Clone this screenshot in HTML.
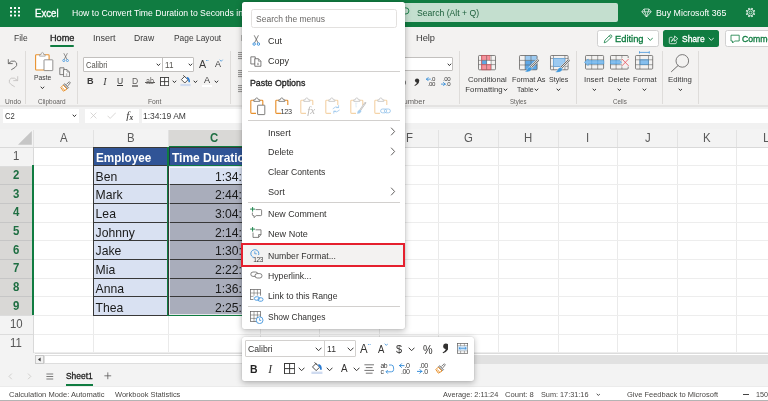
<!DOCTYPE html><html><head><meta charset="utf-8"><title>Excel</title><style>
html,body{margin:0;padding:0;background:#fff}#app{position:relative;width:768px;height:401px;overflow:hidden;background:#fff;font-family:'Liberation Sans', sans-serif}.a{position:absolute;display:block}.t{position:absolute;white-space:nowrap;line-height:20px;transform-origin:0 50%}.ly{position:absolute;left:0;top:0;width:768px;height:401px;will-change:transform}
</style></head><body><div id="app">
<div class="ly">
<div class="a" style="left:0.00px;top:0.00px;width:768.00px;height:26.80px;background:#107c41;"></div>
<svg class="a" style="left:9.70px;top:7.30px;" width="10" height="9.5" viewBox="0 0 10 9.5"><rect x="0" y="0" width="2" height="2" rx="0.3" fill="#fff"/><rect x="0" y="3.7" width="2" height="2" rx="0.3" fill="#fff"/><rect x="0" y="7.4" width="2" height="2" rx="0.3" fill="#fff"/><rect x="4" y="0" width="2" height="2" rx="0.3" fill="#fff"/><rect x="4" y="3.7" width="2" height="2" rx="0.3" fill="#fff"/><rect x="4" y="7.4" width="2" height="2" rx="0.3" fill="#fff"/><rect x="8" y="0" width="2" height="2" rx="0.3" fill="#fff"/><rect x="8" y="3.7" width="2" height="2" rx="0.3" fill="#fff"/><rect x="8" y="7.4" width="2" height="2" rx="0.3" fill="#fff"/></svg>
<div class="a" style="left:330.00px;top:3.20px;width:287.50px;height:19.30px;background:#c4dfcf;border-radius:2px;"></div>
<svg class="a" style="left:398.00px;top:5.00px;" width="14" height="14" viewBox="0 0 14 14"><circle cx="7.8" cy="5.9" r="3.1" fill="none" stroke="#107c41" stroke-width="0.9"/><path d="M5.6 8.2 L3 11" stroke="#107c41" stroke-width="0.9"/></svg>
<svg class="a" style="left:640.50px;top:8.00px;" width="11" height="10" viewBox="0 0 11 10"><path d="M3 1 H8 L10.2 3.8 L5.5 9 L0.8 3.8 Z M0.8 3.8 H10.2 M3 1 L3.9 3.8 L5.5 9 L7.1 3.8 L8 1" fill="none" stroke="#fff" stroke-width="0.7" stroke-linejoin="round"/></svg>
<svg class="a" style="left:745.30px;top:6.70px;" width="11" height="11" viewBox="0 0 11 11"><path d="M8.73 6.84 L9.89 7.32" stroke="#fff" stroke-width="1.5"/><path d="M6.84 8.73 L7.32 9.89" stroke="#fff" stroke-width="1.5"/><path d="M4.16 8.73 L3.68 9.89" stroke="#fff" stroke-width="1.5"/><path d="M2.27 6.84 L1.11 7.32" stroke="#fff" stroke-width="1.5"/><path d="M2.27 4.16 L1.11 3.68" stroke="#fff" stroke-width="1.5"/><path d="M4.16 2.27 L3.68 1.11" stroke="#fff" stroke-width="1.5"/><path d="M6.84 2.27 L7.32 1.11" stroke="#fff" stroke-width="1.5"/><path d="M8.73 4.16 L9.89 3.68" stroke="#fff" stroke-width="1.5"/><circle cx="5.5" cy="5.5" r="3.3" fill="#107c41" stroke="#fff" stroke-width="0.8"/><circle cx="5.5" cy="5.5" r="1.5" fill="none" stroke="#fff" stroke-width="0.7"/></svg>
<div class="a" style="left:0.00px;top:26.80px;width:768.00px;height:23.20px;background:#f3f2f1;"></div>
<div class="a" style="left:50.20px;top:44.90px;width:23.90px;height:1.90px;background:#107c41;border-radius:1px;"></div>
<div class="a" style="left:597.40px;top:29.90px;width:61.20px;height:17.40px;background:#fff;border:0.7px solid #d1d1d1;box-sizing:border-box;border-radius:2.5px;"></div>
<svg class="a" style="left:602.50px;top:33.80px;" width="10" height="10" viewBox="0 0 10 10"><path d="M1.2 8.8 L1.9 6.2 L6.9 1.2 Q7.7 0.5 8.5 1.3 Q9.3 2.1 8.6 2.9 L3.6 7.9 Z M6.2 1.9 L7.9 3.6" fill="none" stroke="#107c41" stroke-width="0.8" stroke-linejoin="round"/></svg>
<svg class="a" style="left:646.70px;top:37.00px;" width="6.6" height="4.4" viewBox="0 0 6.6 4.4"><path d="M1 1 L3.30 3.40 L5.60 1" fill="none" stroke="#107c41" stroke-width="0.85" stroke-linecap="round" stroke-linejoin="round"/></svg>
<div class="a" style="left:663.40px;top:29.90px;width:55.80px;height:17.40px;background:#107c41;border-radius:2.5px;"></div>
<svg class="a" style="left:668.30px;top:33.60px;" width="11" height="11" viewBox="0 0 11 11"><path d="M4 3.3 H2.6 Q1.3 3.3 1.3 4.6 V8.6 Q1.3 9.7 2.6 9.7 H7.2 Q8.4 9.7 8.4 8.6 V7.8 M3.6 7.2 Q3.9 4.3 6.6 4.1 V2 L9.8 4.7 L6.6 7.3 V5.6 Q4.6 5.6 3.6 7.2 Z" fill="none" stroke="#fff" stroke-width="0.75" stroke-linejoin="round" stroke-linecap="round"/></svg>
<svg class="a" style="left:707.70px;top:37.00px;" width="6.6" height="4.4" viewBox="0 0 6.6 4.4"><path d="M1 1 L3.30 3.40 L5.60 1" fill="none" stroke="#fff" stroke-width="0.85" stroke-linecap="round" stroke-linejoin="round"/></svg>
<div class="a" style="left:724.50px;top:29.90px;width:60.00px;height:17.40px;background:#fff;border:0.7px solid #d1d1d1;box-sizing:border-box;border-radius:2.5px;"></div>
<svg class="a" style="left:729.50px;top:33.80px;" width="11" height="10" viewBox="0 0 11 10"><path d="M1 1.2 H9.2 V7 H4.6 L2.6 9 V7 H1 Z" fill="none" stroke="#107c41" stroke-width="0.8" stroke-linejoin="round"/></svg>
<div class="a" style="left:0.00px;top:50.00px;width:768.00px;height:55.00px;background:#f3f2f1;"></div>
<div class="a" style="left:0.00px;top:104.90px;width:768.00px;height:2.20px;background:#e4e3e2;"></div>
<div class="a" style="left:0.00px;top:107.00px;width:768.00px;height:40.50px;background:#f1f1f1;"></div>
<div class="a" style="left:25.25px;top:50.60px;width:0.70px;height:53.40px;background:#dedcda;"></div>
<div class="a" style="left:77.05px;top:50.60px;width:0.70px;height:53.40px;background:#dedcda;"></div>
<div class="a" style="left:230.05px;top:50.60px;width:0.70px;height:53.40px;background:#dedcda;"></div>
<div class="a" style="left:459.35px;top:50.60px;width:0.70px;height:53.40px;background:#dedcda;"></div>
<div class="a" style="left:576.05px;top:50.60px;width:0.70px;height:53.40px;background:#dedcda;"></div>
<div class="a" style="left:661.95px;top:50.60px;width:0.70px;height:53.40px;background:#dedcda;"></div>
<div class="a" style="left:697.75px;top:50.60px;width:0.70px;height:53.40px;background:#dedcda;"></div>
<svg class="a" style="left:7.00px;top:57.50px;" width="12" height="13" viewBox="0 0 12 13"><path d="M1.3 1.6 V5.6 H5.3 M1.5 5.4 Q4.6 1.9 7.8 3.2 Q10.6 4.6 9.6 7.6 Q8.9 9.4 4.6 11.6" fill="none" stroke="#5c5b5a" stroke-width="0.85" stroke-linecap="round" stroke-linejoin="round"/></svg>
<svg class="a" style="left:7.00px;top:75.00px;" width="12" height="13" viewBox="0 0 12 13"><path d="M10.7 1.6 V5.6 H6.7 M10.5 5.4 Q7.4 1.9 4.2 3.2 Q1.4 4.6 2.4 7.6 Q3.1 9.4 7.4 11.6" fill="none" stroke="#c3c1bf" stroke-width="0.85" stroke-linecap="round" stroke-linejoin="round"/></svg>
<svg class="a" style="left:34.00px;top:51.00px;" width="21" height="21" viewBox="0 0 21 21"><rect x="1.6" y="3.8" width="13.5" height="15.2" rx="0.8" fill="#fff" stroke="#e8912d" stroke-width="1.1"/><path d="M5.6 5.2 V3.6 H7 Q7.2 1.4 8.4 1.4 Q9.6 1.4 9.8 3.6 H11.2 V5.2 Z" fill="#f3f2f1" stroke="#8a8886" stroke-width="0.6"/><rect x="10" y="8.8" width="8.8" height="10.8" rx="0.5" fill="#fff" stroke="#7a7978" stroke-width="0.8"/></svg>
<svg class="a" style="left:40.35px;top:86.00px;" width="4.9" height="3.6" viewBox="0 0 4.9 3.6"><path d="M1 1 L2.45 2.60 L3.90 1" fill="none" stroke="#333" stroke-width="1.0" stroke-linecap="round" stroke-linejoin="round"/></svg>
<svg class="a" style="left:61.50px;top:52.60px;" width="7.2" height="9.450000000000001" viewBox="0 0 8 10.5"><path d="M2.2 0.6 L5.6 7.2 M5.8 0.6 L2.4 7.2" stroke="#5c5b5a" stroke-width="0.7" fill="none" stroke-linecap="round"/><circle cx="2" cy="8.4" r="1.15" fill="#fff" stroke="#2b88d8" stroke-width="0.8"/><circle cx="6" cy="8.4" r="1.15" fill="#fff" stroke="#2b88d8" stroke-width="0.8"/></svg>
<svg class="a" style="left:59.40px;top:66.80px;" width="11.5" height="10.5" viewBox="0 0 11.5 10.5"><path d="M0.8 0.8 H5 V7.6 H0.8 Z" fill="none" stroke="#5c5b5a" stroke-width="0.75"/><path d="M4.6 2.6 H8 L10.4 5 V9.8 H4.6 Z" fill="#fff" stroke="#5c5b5a" stroke-width="0.75" stroke-linejoin="round"/><path d="M8 2.6 V5 H10.4 M6.8 7 H8.4 M6.8 8.2 H8.4" fill="none" stroke="#5c5b5a" stroke-width="0.55"/></svg>
<svg class="a" style="left:59.60px;top:81.40px;" width="11.0" height="11.0" viewBox="0 0 11 11"><path d="M6.4 3.4 L9.4 0.8 L10.3 1.8 L7.8 4.9" fill="#fff" stroke="#5c5b5a" stroke-width="0.8" stroke-linejoin="round"/><path d="M4.6 2.6 L8.6 6.6 L7.4 7.8 L3.4 3.8 Z" fill="#c8c6c4" stroke="#5c5b5a" stroke-width="0.6"/><path d="M3.2 4.2 L7 8 L3.4 10.2 L0.8 6.6 Z" fill="#fff" stroke="#e8912d" stroke-width="1" stroke-linejoin="round"/><path d="M2.2 6.4 L4.6 9.2" stroke="#e8912d" stroke-width="0.9"/></svg>
<div class="a" style="left:82.80px;top:56.70px;width:111.10px;height:14.90px;background:#fff;border:0.7px solid #c2c0be;box-sizing:border-box;border-radius:1px;"></div>
<div class="a" style="left:162.30px;top:56.70px;width:0.70px;height:14.90px;background:#c2c0be;"></div>
<svg class="a" style="left:156.35px;top:63.00px;" width="4.9" height="3.6" viewBox="0 0 4.9 3.6"><path d="M1 1 L2.45 2.60 L3.90 1" fill="none" stroke="#333" stroke-width="1.0" stroke-linecap="round" stroke-linejoin="round"/></svg>
<svg class="a" style="left:188.25px;top:63.00px;" width="4.9" height="3.6" viewBox="0 0 4.9 3.6"><path d="M1 1 L2.45 2.60 L3.90 1" fill="none" stroke="#333" stroke-width="1.0" stroke-linecap="round" stroke-linejoin="round"/></svg>
<svg class="a" style="left:205.10px;top:60.25px;" width="4.4" height="0.7" viewBox="0 0 4.4 0.7"><path d="M1 1 L2.20 -0.30 L3.40 1" fill="none" stroke="#2b88d8" stroke-width="0.7" stroke-linecap="round" stroke-linejoin="round"/></svg>
<svg class="a" style="left:219.40px;top:58.95px;" width="4.4" height="3.3" viewBox="0 0 4.4 3.3"><path d="M1 1 L2.20 2.30 L3.40 1" fill="none" stroke="#2b88d8" stroke-width="0.7" stroke-linecap="round" stroke-linejoin="round"/></svg>
<div class="a" style="left:116.70px;top:85.40px;width:6.00px;height:0.70px;background:#3a3a3a;"></div>
<div class="a" style="left:132.00px;top:85.00px;width:6.00px;height:0.60px;background:#8a8886;"></div>
<div class="a" style="left:132.00px;top:86.40px;width:6.00px;height:0.60px;background:#8a8886;"></div>
<div class="a" style="left:145.20px;top:81.90px;width:9.80px;height:0.55px;background:#605e5c;"></div>
<svg class="a" style="left:159.90px;top:76.70px;" width="9.2" height="9.2" viewBox="0 0 9.2 9.2"><rect x="0.5" y="0.5" width="8.2" height="8.2" fill="#fff" stroke="#3b3a39" stroke-width="0.9"/><path d="M4.6 0.5 V8.7 M0.5 4.6 H8.7" stroke="#3b3a39" stroke-width="0.9"/></svg>
<svg class="a" style="left:172.05px;top:80.00px;" width="4.9" height="3.6" viewBox="0 0 4.9 3.6"><path d="M1 1 L2.45 2.60 L3.90 1" fill="none" stroke="#333" stroke-width="1.0" stroke-linecap="round" stroke-linejoin="round"/></svg>
<svg class="a" style="left:180.40px;top:75.40px;" width="11.0" height="12.0" viewBox="0 0 11 12"><path d="M4.6 1.4 L8 4.8 L4.8 8 L1.4 4.6 Z" fill="#fff" stroke="#3b3a39" stroke-width="0.85" stroke-linejoin="round"/><path d="M3.4 0.5 L5.2 2.2" stroke="#3b3a39" stroke-width="0.8" stroke-linecap="round"/><path d="M7.2 1.9 Q10.2 2.6 10 7.2 H8.5 Q8.9 4.6 6.5 2.9 Z" fill="#2b7cd3"/><rect x="0.4" y="8.9" width="10.2" height="2.2" fill="#cfdbf0"/></svg>
<svg class="a" style="left:193.15px;top:80.00px;" width="4.9" height="3.6" viewBox="0 0 4.9 3.6"><path d="M1 1 L2.45 2.60 L3.90 1" fill="none" stroke="#333" stroke-width="1.0" stroke-linecap="round" stroke-linejoin="round"/></svg>
<div class="a" style="left:202.30px;top:85.00px;width:9.70px;height:1.80px;background:#fff;"></div>
<svg class="a" style="left:214.25px;top:80.00px;" width="4.9" height="3.6" viewBox="0 0 4.9 3.6"><path d="M1 1 L2.45 2.60 L3.90 1" fill="none" stroke="#333" stroke-width="1.0" stroke-linecap="round" stroke-linejoin="round"/></svg>
<svg class="a" style="left:238.40px;top:52.40px;" width="6" height="8" viewBox="0 0 6 8"><path d="M0 0.6 H6 M0 2.6 H6 M0 4.6 H6 M0 6.6 H6" stroke="#3b3a39" stroke-width="0.55"/></svg>
<svg class="a" style="left:238.40px;top:69.60px;" width="6" height="8" viewBox="0 0 6 8"><path d="M0 0.6 H6 M0 2.6 H6 M0 4.6 H6 M0 6.6 H6" stroke="#3b3a39" stroke-width="0.55"/></svg>
<svg class="a" style="left:238.40px;top:85.00px;" width="6" height="8" viewBox="0 0 6 8"><path d="M0 0.6 H6 M0 2.6 H6 M0 4.6 H6 M0 6.6 H6" stroke="#3b3a39" stroke-width="0.55"/></svg>
<div class="a" style="left:380.00px;top:56.80px;width:72.80px;height:14.70px;background:#fff;border:0.7px solid #c2c0be;box-sizing:border-box;border-radius:1px;"></div>
<svg class="a" style="left:446.75px;top:63.20px;" width="4.9" height="3.6" viewBox="0 0 4.9 3.6"><path d="M1 1 L2.45 2.60 L3.90 1" fill="none" stroke="#333" stroke-width="1.0" stroke-linecap="round" stroke-linejoin="round"/></svg>
<svg class="a" style="left:414.30px;top:77.75px;" width="5.4" height="8.1" viewBox="0 0 6 9"><circle cx="3.4" cy="2.8" r="2.35" fill="#323130"/><path d="M5.75 2.6 Q6.2 6.8 1 8.9 L0.5 8.2 Q3.5 6.6 3.4 4.2 Z" fill="#323130"/></svg>
<svg class="a" style="left:426.10px;top:76.00px;" width="10.8" height="10.8" viewBox="0 0 10 10"><path d="M0.5 2.9 H4 M0.5 2.9 L2 1.4 M0.5 2.9 L2 4.4" stroke="#2b88d8" stroke-width="0.75" fill="none" stroke-linecap="round"/><text x="4.3" y="4.6" style="font-family:'Liberation Sans',sans-serif;font-size:5.7px;letter-spacing:-0.35px" fill="#3b3a39">.0</text><text x="1.6" y="9.5" style="font-family:'Liberation Sans',sans-serif;font-size:5.7px;letter-spacing:-0.35px" fill="#3b3a39">.00</text></svg>
<svg class="a" style="left:440.90px;top:76.00px;" width="10.8" height="10.8" viewBox="0 0 10 10"><path d="M0.3 7.5 H3.8 M3.8 7.5 L2.3 6 M3.8 7.5 L2.3 9" stroke="#2b88d8" stroke-width="0.75" fill="none" stroke-linecap="round"/><text x="1.8" y="4.6" style="font-family:'Liberation Sans',sans-serif;font-size:5.7px;letter-spacing:-0.35px" fill="#3b3a39">.00</text><text x="4.6" y="9.5" style="font-family:'Liberation Sans',sans-serif;font-size:5.7px;letter-spacing:-0.35px" fill="#3b3a39">.0</text></svg>
<svg class="a" style="left:478.40px;top:55.00px;overflow:visible;" width="18" height="15.3" viewBox="0 0 18 15.3"><rect x="3.60" y="0.50" width="8.20" height="4.90" fill="#f7919b"/><rect x="3.60" y="5.40" width="5.30" height="4.20" fill="#5ea7e6"/><rect x="8.90" y="5.40" width="4.20" height="4.20" fill="#fff"/><rect x="3.60" y="9.60" width="9.10" height="5.20" fill="#f7919b"/><path d="M3.60 0.5 V14.80" stroke="#5c5b5a" stroke-width="0.55"/><path d="M8.60 0.5 V14.80" stroke="#5c5b5a" stroke-width="0.55"/><path d="M13.10 0.5 V14.80" stroke="#5c5b5a" stroke-width="0.55"/><path d="M0.5 5.40 H17.50" stroke="#5c5b5a" stroke-width="0.55"/><path d="M0.5 9.60 H17.50" stroke="#5c5b5a" stroke-width="0.55"/><rect x="0.5" y="0.5" width="17.00" height="14.30" rx="0.9" fill="none" stroke="#5c5b5a" stroke-width="0.75"/><path d="M3.6 0.5 H11.8 V5.4 M3.6 9.6 H12.7 V14.8 H3.6" fill="none" stroke="#e8505b" stroke-width="0.6"/><path d="M3.6 0.5 V14.8" stroke="#e8505b" stroke-width="0.6"/></svg>
<svg class="a" style="left:502.95px;top:88.00px;" width="4.9" height="3.6" viewBox="0 0 4.9 3.6"><path d="M1 1 L2.45 2.60 L3.90 1" fill="none" stroke="#333" stroke-width="1.0" stroke-linecap="round" stroke-linejoin="round"/></svg>
<svg class="a" style="left:519.30px;top:55.00px;overflow:visible;" width="18.6" height="15.3" viewBox="0 0 18.6 15.3"><rect x="6.10" y="0.50" width="12.00" height="4.90" fill="#9ccaf1"/><rect x="6.10" y="5.40" width="12.00" height="9.40" fill="#5ea7e6"/><path d="M6.10 0.5 V14.80" stroke="#5c5b5a" stroke-width="0.55"/><path d="M12.00 0.5 V14.80" stroke="#5c5b5a" stroke-width="0.55"/><path d="M0.5 5.40 H18.10" stroke="#5c5b5a" stroke-width="0.55"/><path d="M0.5 10.00 H18.10" stroke="#5c5b5a" stroke-width="0.55"/><rect x="0.5" y="0.5" width="17.60" height="14.30" rx="0.9" fill="none" stroke="#5c5b5a" stroke-width="0.75"/><path d="M18.8 5.4 L11.9 12.2" stroke="#f3f2f1" stroke-width="3.2" stroke-linecap="round"/><path d="M18.8 5.4 L11.9 12.2" stroke="#5c5b5a" stroke-width="2.1" stroke-linecap="round"/><path d="M18.8 5.4 L11.9 12.2" stroke="#fafafa" stroke-width="0.95" stroke-linecap="round"/><path d="M12.80 12.60 Q9.70 11.00 8.30 13.80 Q7.70 15.80 5.70 16.60 Q10.70 17.80 12.90 14.60 Z" fill="#3f97dd" stroke="#f3f2f1" stroke-width="0.35"/></svg>
<svg class="a" style="left:534.15px;top:88.00px;" width="4.9" height="3.6" viewBox="0 0 4.9 3.6"><path d="M1 1 L2.45 2.60 L3.90 1" fill="none" stroke="#333" stroke-width="1.0" stroke-linecap="round" stroke-linejoin="round"/></svg>
<svg class="a" style="left:549.70px;top:55.00px;overflow:visible;" width="18.6" height="15.3" viewBox="0 0 18.6 15.3"><rect x="3.50" y="3.50" width="11.40" height="7.80" fill="#9ccaf1"/><path d="M3.50 0.5 V14.80" stroke="#5c5b5a" stroke-width="0.55"/><path d="M14.90 0.5 V14.80" stroke="#5c5b5a" stroke-width="0.55"/><path d="M0.5 3.50 H18.10" stroke="#5c5b5a" stroke-width="0.55"/><path d="M0.5 11.30 H18.10" stroke="#5c5b5a" stroke-width="0.55"/><rect x="0.5" y="0.5" width="17.60" height="14.30" rx="0.9" fill="none" stroke="#5c5b5a" stroke-width="0.75"/><rect x="3.5" y="3.5" width="11.4" height="7.8" fill="#9ccaf1" stroke="#5ea7e6" stroke-width="0.6"/><path d="M18.6 5.6 L11.4 12.6" stroke="#f3f2f1" stroke-width="3.2" stroke-linecap="round"/><path d="M18.6 5.6 L11.4 12.6" stroke="#5c5b5a" stroke-width="2.1" stroke-linecap="round"/><path d="M18.6 5.6 L11.4 12.6" stroke="#fafafa" stroke-width="0.95" stroke-linecap="round"/><path d="M12.30 13.00 Q9.20 11.40 7.80 14.20 Q7.20 16.20 5.20 17.00 Q10.20 18.20 12.40 15.00 Z" fill="#3f97dd" stroke="#f3f2f1" stroke-width="0.35"/></svg>
<svg class="a" style="left:556.25px;top:87.80px;" width="4.9" height="3.6" viewBox="0 0 4.9 3.6"><path d="M1 1 L2.45 2.60 L3.90 1" fill="none" stroke="#333" stroke-width="1.0" stroke-linecap="round" stroke-linejoin="round"/></svg>
<svg class="a" style="left:584.50px;top:55.40px;overflow:visible;" width="19.1" height="14.6" viewBox="0 0 19.1 14.6"><path d="M6.70 0.5 V14.10" stroke="#5c5b5a" stroke-width="0.55"/><path d="M12.70 0.5 V14.10" stroke="#5c5b5a" stroke-width="0.55"/><path d="M0.5 4.80 H18.60" stroke="#5c5b5a" stroke-width="0.55"/><path d="M0.5 9.70 H18.60" stroke="#5c5b5a" stroke-width="0.55"/><rect x="0.5" y="0.5" width="18.10" height="13.60" rx="0.9" fill="none" stroke="#5c5b5a" stroke-width="0.75"/><path d="M-0.6 7.3 L3.2 4 V5.6 H18.8 V9 H3.2 V10.6 Z" fill="#86bfee" stroke="#3f97dd" stroke-width="0.5" stroke-linejoin="round"/><path d="M6.7 5.6 V9 M12.7 5.6 V9" stroke="#3f97dd" stroke-width="0.4"/></svg>
<svg class="a" style="left:609.50px;top:55.40px;overflow:visible;" width="18.7" height="14.6" viewBox="0 0 18.7 14.6"><path d="M6.10 0.5 V14.10" stroke="#5c5b5a" stroke-width="0.55"/><path d="M11.90 0.5 V14.10" stroke="#5c5b5a" stroke-width="0.55"/><path d="M0.5 4.80 H18.20" stroke="#5c5b5a" stroke-width="0.55"/><path d="M0.5 9.70 H18.20" stroke="#5c5b5a" stroke-width="0.55"/><rect x="0.5" y="0.5" width="17.70" height="13.60" rx="0.9" fill="none" stroke="#5c5b5a" stroke-width="0.75"/><rect x="11.6" y="3" width="8" height="8.6" fill="#f3f2f1"/><path d="M0.5 5.6 H9.8 L11.4 7.3 L9.8 9 H0.5 Z" fill="#86bfee" stroke="#3f97dd" stroke-width="0.5" stroke-linejoin="round"/><path d="M6.1 5.6 V9" stroke="#3f97dd" stroke-width="0.4"/><path d="M12.2 4.2 L18.4 10.6 M18.4 4.2 L12.2 10.6" stroke="#e8505b" stroke-width="0.8" stroke-linecap="round"/></svg>
<svg class="a" style="left:635.00px;top:55.40px;overflow:visible;" width="18.2" height="14.6" viewBox="0 0 18.2 14.6"><rect x="4.90" y="4.80" width="8.60" height="4.90" fill="#86bfee"/><path d="M4.90 0.5 V14.10" stroke="#5c5b5a" stroke-width="0.55"/><path d="M13.50 0.5 V14.10" stroke="#5c5b5a" stroke-width="0.55"/><path d="M0.5 4.80 H17.70" stroke="#5c5b5a" stroke-width="0.55"/><path d="M0.5 9.70 H17.70" stroke="#5c5b5a" stroke-width="0.55"/><rect x="0.5" y="0.5" width="17.20" height="13.60" rx="0.9" fill="none" stroke="#5c5b5a" stroke-width="0.75"/><rect x="4.9" y="4.8" width="8.6" height="4.9" fill="none" stroke="#3f97dd" stroke-width="0.5"/></svg>
<svg class="a" style="left:638.60px;top:51.40px;" width="11" height="3" viewBox="0 0 11 3"><path d="M0.5 1.4 H10.3 M0.5 0.2 V2.6 M10.3 0.2 V2.6" stroke="#2b88d8" stroke-width="0.7"/></svg>
<svg class="a" style="left:591.55px;top:87.60px;" width="4.9" height="3.6" viewBox="0 0 4.9 3.6"><path d="M1 1 L2.45 2.60 L3.90 1" fill="none" stroke="#333" stroke-width="1.0" stroke-linecap="round" stroke-linejoin="round"/></svg>
<svg class="a" style="left:616.55px;top:87.60px;" width="4.9" height="3.6" viewBox="0 0 4.9 3.6"><path d="M1 1 L2.45 2.60 L3.90 1" fill="none" stroke="#333" stroke-width="1.0" stroke-linecap="round" stroke-linejoin="round"/></svg>
<svg class="a" style="left:641.75px;top:87.60px;" width="4.9" height="3.6" viewBox="0 0 4.9 3.6"><path d="M1 1 L2.45 2.60 L3.90 1" fill="none" stroke="#333" stroke-width="1.0" stroke-linecap="round" stroke-linejoin="round"/></svg>
<svg class="a" style="left:677.55px;top:87.60px;" width="4.9" height="3.6" viewBox="0 0 4.9 3.6"><path d="M1 1 L2.45 2.60 L3.90 1" fill="none" stroke="#333" stroke-width="1.0" stroke-linecap="round" stroke-linejoin="round"/></svg>
<svg class="a" style="left:670.00px;top:53.00px;" width="20" height="20" viewBox="0 0 20 20"><circle cx="12.3" cy="7.9" r="6.3" fill="none" stroke="#5c5b5a" stroke-width="0.8"/><path d="M7.9 12.7 L1.5 18.6" stroke="#5c5b5a" stroke-width="0.9" stroke-linecap="round"/></svg>
<div class="a" style="left:3.00px;top:108.60px;width:76.30px;height:14.10px;background:#fff;"></div>
<div class="a" style="left:84.70px;top:108.60px;width:54.10px;height:14.10px;background:#fff;"></div>
<div class="a" style="left:141.80px;top:108.60px;width:630.00px;height:14.10px;background:#fff;"></div>
<svg class="a" style="left:72.25px;top:114.40px;" width="4.9" height="3.6" viewBox="0 0 4.9 3.6"><path d="M1 1 L2.45 2.60 L3.90 1" fill="none" stroke="#333" stroke-width="1.0" stroke-linecap="round" stroke-linejoin="round"/></svg>
<svg class="a" style="left:90.20px;top:112.00px;" width="7" height="7" viewBox="0 0 7 7"><path d="M0.6 0.6 L6.4 6.4 M6.4 0.6 L0.6 6.4" stroke="#c8c6c4" stroke-width="0.7"/></svg>
<svg class="a" style="left:106.60px;top:112.00px;" width="9.5" height="7" viewBox="0 0 9.5 7"><path d="M0.6 3.8 L3.2 6.4 L8.9 0.6" fill="none" stroke="#c8c6c4" stroke-width="0.7"/></svg>
<div class="a" style="left:33.40px;top:147.20px;width:734.60px;height:205.70px;background:#fff;"></div>
<div class="a" style="left:0.00px;top:129.40px;width:768.00px;height:17.80px;background:#f3f3f3;"></div>
<div class="a" style="left:0.00px;top:147.20px;width:33.40px;height:205.70px;background:#f3f3f3;"></div>
<div class="a" style="left:169.00px;top:129.60px;width:91.00px;height:17.60px;background:#d9d8d6;"></div>
<div class="a" style="left:0.00px;top:165.90px;width:33.40px;height:149.60px;background:#d9d8d6;"></div>
<div class="a" style="left:92.95px;top:147.20px;width:0.90px;height:205.70px;background:#eaeaea;"></div>
<div class="a" style="left:92.90px;top:130.00px;width:1.00px;height:17.20px;background:#e2e2e2;"></div>
<div class="a" style="left:167.95px;top:147.20px;width:0.90px;height:205.70px;background:#eaeaea;"></div>
<div class="a" style="left:167.90px;top:130.00px;width:1.00px;height:17.20px;background:#e2e2e2;"></div>
<div class="a" style="left:259.55px;top:147.20px;width:0.90px;height:205.70px;background:#eaeaea;"></div>
<div class="a" style="left:259.50px;top:130.00px;width:1.00px;height:17.20px;background:#e2e2e2;"></div>
<div class="a" style="left:319.15px;top:147.20px;width:0.90px;height:205.70px;background:#eaeaea;"></div>
<div class="a" style="left:319.10px;top:130.00px;width:1.00px;height:17.20px;background:#e2e2e2;"></div>
<div class="a" style="left:378.75px;top:147.20px;width:0.90px;height:205.70px;background:#eaeaea;"></div>
<div class="a" style="left:378.70px;top:130.00px;width:1.00px;height:17.20px;background:#e2e2e2;"></div>
<div class="a" style="left:438.35px;top:147.20px;width:0.90px;height:205.70px;background:#eaeaea;"></div>
<div class="a" style="left:438.30px;top:130.00px;width:1.00px;height:17.20px;background:#e2e2e2;"></div>
<div class="a" style="left:497.95px;top:147.20px;width:0.90px;height:205.70px;background:#eaeaea;"></div>
<div class="a" style="left:497.90px;top:130.00px;width:1.00px;height:17.20px;background:#e2e2e2;"></div>
<div class="a" style="left:557.55px;top:147.20px;width:0.90px;height:205.70px;background:#eaeaea;"></div>
<div class="a" style="left:557.50px;top:130.00px;width:1.00px;height:17.20px;background:#e2e2e2;"></div>
<div class="a" style="left:617.15px;top:147.20px;width:0.90px;height:205.70px;background:#eaeaea;"></div>
<div class="a" style="left:617.10px;top:130.00px;width:1.00px;height:17.20px;background:#e2e2e2;"></div>
<div class="a" style="left:676.75px;top:147.20px;width:0.90px;height:205.70px;background:#eaeaea;"></div>
<div class="a" style="left:676.70px;top:130.00px;width:1.00px;height:17.20px;background:#e2e2e2;"></div>
<div class="a" style="left:736.35px;top:147.20px;width:0.90px;height:205.70px;background:#eaeaea;"></div>
<div class="a" style="left:736.30px;top:130.00px;width:1.00px;height:17.20px;background:#e2e2e2;"></div>
<div class="a" style="left:795.95px;top:147.20px;width:0.90px;height:205.70px;background:#eaeaea;"></div>
<div class="a" style="left:795.90px;top:130.00px;width:1.00px;height:17.20px;background:#e2e2e2;"></div>
<div class="a" style="left:855.55px;top:147.20px;width:0.90px;height:205.70px;background:#eaeaea;"></div>
<div class="a" style="left:855.50px;top:130.00px;width:1.00px;height:17.20px;background:#e2e2e2;"></div>
<div class="a" style="left:32.90px;top:130.00px;width:1.00px;height:17.20px;background:#e2e2e2;"></div>
<div class="a" style="left:33.40px;top:165.40px;width:734.60px;height:1.00px;background:#ededed;"></div>
<div class="a" style="left:0.00px;top:165.50px;width:33.40px;height:0.80px;background:#dcdcdc;"></div>
<div class="a" style="left:33.40px;top:184.10px;width:734.60px;height:1.00px;background:#ededed;"></div>
<div class="a" style="left:0.00px;top:184.20px;width:33.40px;height:0.80px;background:#c6c6c6;"></div>
<div class="a" style="left:33.40px;top:202.80px;width:734.60px;height:1.00px;background:#ededed;"></div>
<div class="a" style="left:0.00px;top:202.90px;width:33.40px;height:0.80px;background:#c6c6c6;"></div>
<div class="a" style="left:33.40px;top:221.50px;width:734.60px;height:1.00px;background:#ededed;"></div>
<div class="a" style="left:0.00px;top:221.60px;width:33.40px;height:0.80px;background:#c6c6c6;"></div>
<div class="a" style="left:33.40px;top:240.20px;width:734.60px;height:1.00px;background:#ededed;"></div>
<div class="a" style="left:0.00px;top:240.30px;width:33.40px;height:0.80px;background:#c6c6c6;"></div>
<div class="a" style="left:33.40px;top:258.90px;width:734.60px;height:1.00px;background:#ededed;"></div>
<div class="a" style="left:0.00px;top:259.00px;width:33.40px;height:0.80px;background:#c6c6c6;"></div>
<div class="a" style="left:33.40px;top:277.60px;width:734.60px;height:1.00px;background:#ededed;"></div>
<div class="a" style="left:0.00px;top:277.70px;width:33.40px;height:0.80px;background:#c6c6c6;"></div>
<div class="a" style="left:33.40px;top:296.30px;width:734.60px;height:1.00px;background:#ededed;"></div>
<div class="a" style="left:0.00px;top:296.40px;width:33.40px;height:0.80px;background:#c6c6c6;"></div>
<div class="a" style="left:33.40px;top:315.00px;width:734.60px;height:1.00px;background:#ededed;"></div>
<div class="a" style="left:0.00px;top:315.10px;width:33.40px;height:0.80px;background:#dcdcdc;"></div>
<div class="a" style="left:33.40px;top:333.70px;width:734.60px;height:1.00px;background:#ededed;"></div>
<div class="a" style="left:0.00px;top:333.80px;width:33.40px;height:0.80px;background:#dcdcdc;"></div>
<div class="a" style="left:33.40px;top:352.40px;width:734.60px;height:1.00px;background:#ededed;"></div>
<div class="a" style="left:0.00px;top:352.50px;width:33.40px;height:0.80px;background:#dcdcdc;"></div>
<div class="a" style="left:0.00px;top:146.70px;width:768.00px;height:1.00px;background:#d9d9d9;"></div>
<div class="a" style="left:32.90px;top:147.20px;width:1.00px;height:205.70px;background:#d9d9d9;"></div>
<svg class="a" style="left:18.00px;top:130.80px;" width="14" height="14" viewBox="0 0 14 14"><path d="M13.8 0 V13.8 H0 Z" fill="#c6c6c6"/></svg>
<div class="a" style="left:93.40px;top:147.20px;width:166.60px;height:18.70px;background:#305496;"></div>
<div class="a" style="left:93.40px;top:165.90px;width:75.00px;height:149.60px;background:#d9e1f2;"></div>
<div class="a" style="left:168.40px;top:165.90px;width:91.60px;height:18.70px;background:#d9e1f2;"></div>
<div class="a" style="left:168.40px;top:184.60px;width:91.60px;height:130.90px;background:#a9adbb;"></div>
<div class="a" style="left:93.40px;top:146.75px;width:166.60px;height:0.90px;background:#383838;"></div>
<div class="a" style="left:93.40px;top:165.45px;width:166.60px;height:0.90px;background:#383838;"></div>
<div class="a" style="left:93.40px;top:184.15px;width:166.60px;height:0.90px;background:#383838;"></div>
<div class="a" style="left:93.40px;top:202.85px;width:166.60px;height:0.90px;background:#383838;"></div>
<div class="a" style="left:93.40px;top:221.55px;width:166.60px;height:0.90px;background:#383838;"></div>
<div class="a" style="left:93.40px;top:240.25px;width:166.60px;height:0.90px;background:#383838;"></div>
<div class="a" style="left:93.40px;top:258.95px;width:166.60px;height:0.90px;background:#383838;"></div>
<div class="a" style="left:93.40px;top:277.65px;width:166.60px;height:0.90px;background:#383838;"></div>
<div class="a" style="left:93.40px;top:296.35px;width:166.60px;height:0.90px;background:#383838;"></div>
<div class="a" style="left:93.40px;top:315.05px;width:166.60px;height:0.90px;background:#383838;"></div>
<div class="a" style="left:92.95px;top:147.20px;width:0.90px;height:168.30px;background:#383838;"></div>
<div class="a" style="left:167.95px;top:147.20px;width:0.90px;height:168.30px;background:#383838;"></div>
<div class="a" style="left:259.55px;top:147.20px;width:0.90px;height:168.30px;background:#383838;"></div>
<div class="a" style="left:169.00px;top:146.10px;width:91.00px;height:1.40px;background:#107c41;"></div>
<div class="a" style="left:32.20px;top:164.70px;width:1.80px;height:150.80px;background:#107c41;"></div>
<div class="a" style="left:169.20px;top:147.60px;width:1.10px;height:17.90px;background:#1d2f5e;"></div>
<div class="a" style="left:167.30px;top:146.60px;width:1.90px;height:18.70px;background:#107c41;"></div>
<div class="a" style="left:167.30px;top:164.70px;width:93.40px;height:151.80px;border:1.9px solid #107c41;box-sizing:border-box;"></div>
<div class="a" style="left:169.20px;top:166.60px;width:89.60px;height:148.00px;border:0.9px solid rgba(255,255,255,0.7);box-sizing:border-box;"></div>
<div class="a" style="left:0.00px;top:352.90px;width:35.00px;height:11.60px;background:#f3f3f3;"></div>
<div class="a" style="left:35.00px;top:352.90px;width:733.00px;height:11.60px;background:#fff;"></div>
<div class="a" style="left:35.00px;top:352.60px;width:733.00px;height:0.80px;background:#dcdcdc;"></div>
<div class="a" style="left:35.00px;top:355.00px;width:9.30px;height:9.20px;background:#f1f1f1;border:0.6px solid #c8c8c8;box-sizing:border-box;"></div>
<svg class="a" style="left:37.40px;top:357.20px;" width="5" height="5" viewBox="0 0 5 5"><path d="M3.6 0.6 V4.4 L1 2.5 Z" fill="#333"/></svg>
<div class="a" style="left:44.30px;top:355.00px;width:730.00px;height:9.20px;background:#fff;border:0.7px solid #dedede;box-sizing:border-box;"></div>
<div class="a" style="left:300.00px;top:355.00px;width:470.00px;height:9.40px;background:#e1e1e1;"></div>
<div class="a" style="left:0.00px;top:363.80px;width:768.00px;height:22.90px;background:#f3f3f3;"></div>
<svg class="a" style="left:8.00px;top:372.80px;" width="5" height="7" viewBox="0 0 5 7"><path d="M3.8 0.6 L1 3.4 L3.8 6.2" fill="none" stroke="#c8c6c4" stroke-width="0.8"/></svg>
<svg class="a" style="left:27.40px;top:372.80px;" width="5" height="7" viewBox="0 0 5 7"><path d="M1 0.6 L3.8 3.4 L1 6.2" fill="none" stroke="#c8c6c4" stroke-width="0.8"/></svg>
<svg class="a" style="left:45.60px;top:372.60px;" width="8" height="7" viewBox="0 0 8 7"><path d="M0.4 1 H7.2 M0.4 3.5 H7.2 M0.4 6 H7.2" stroke="#5c5b5a" stroke-width="0.8"/></svg>
<div class="a" style="left:66.30px;top:384.00px;width:26.30px;height:1.70px;background:#107c41;"></div>
<svg class="a" style="left:104.20px;top:372.40px;" width="8" height="8" viewBox="0 0 8 8"><path d="M3.8 0.4 V7.2 M0.4 3.8 H7.2" stroke="#5c5b5a" stroke-width="0.8"/></svg>
<div class="a" style="left:0.00px;top:386.50px;width:768.00px;height:14.50px;background:#fff;"></div>
<div class="a" style="left:0.00px;top:399.80px;width:768.00px;height:1.20px;background:#b4b4b4;"></div>
<div class="a" style="left:0.00px;top:386.20px;width:768.00px;height:0.60px;background:#ebebeb;"></div>
<svg class="a" style="left:595.50px;top:393.05px;" width="4.8" height="3.5" viewBox="0 0 4.8 3.5"><path d="M1 1 L2.40 2.50 L3.80 1" fill="none" stroke="#444" stroke-width="0.9" stroke-linecap="round" stroke-linejoin="round"/></svg>
<div class="a" style="left:743.40px;top:394.00px;width:6.00px;height:0.70px;background:#444;"></div>
<span class="t" style="left:34.79px;top:4px;font-size:10.3px;color:#fff;-webkit-text-stroke:0.35px #fff;transform:scaleX(0.935);">Excel</span>
<span class="t" style="left:71.90px;top:3px;font-size:9.33px;color:#fff;transform:scaleX(0.929);">How to Convert Time Duration to Seconds in Excel</span>
<span class="t" style="left:416.92px;top:3px;font-size:9.33px;color:#1b5e3a;transform:scaleX(0.924);">Search (Alt + Q)</span>
<span class="t" style="left:655.52px;top:3px;font-size:9.33px;color:#fff;transform:scaleX(0.943);">Buy Microsoft 365</span>
<span class="t" style="left:13.62px;top:28px;font-size:9.33px;color:#3a3a3a;transform:scaleX(0.906);">File</span>
<span class="t" style="left:50.42px;top:28px;font-size:9.33px;color:#242424;-webkit-text-stroke:0.32px #242424;transform:scaleX(0.981);">Home</span>
<span class="t" style="left:93.32px;top:28px;font-size:9.33px;color:#3a3a3a;transform:scaleX(0.965);">Insert</span>
<span class="t" style="left:134.42px;top:28px;font-size:9.33px;color:#3a3a3a;transform:scaleX(0.924);">Draw</span>
<span class="t" style="left:174.22px;top:28px;font-size:9.33px;color:#3a3a3a;transform:scaleX(0.901);">Page Layout</span>
<span class="t" style="left:416.12px;top:28px;font-size:9.33px;color:#3a3a3a;transform:scaleX(0.991);">Help</span>
<span class="t" style="left:240.60px;top:28px;font-size:9.33px;color:#3a3a3a;transform:scaleX(0.920);">Formulas</span>
<span class="t" style="left:615.02px;top:29px;font-size:9.33px;color:#107c41;-webkit-text-stroke:0.32px #107c41;">Editing</span>
<span class="t" style="left:681.72px;top:29px;font-size:9.33px;color:#fff;-webkit-text-stroke:0.32px #fff;transform:scaleX(0.909);">Share</span>
<span class="t" style="left:742.40px;top:29px;font-size:9.33px;color:#107c41;-webkit-text-stroke:0.32px #107c41;transform:scaleX(0.930);">Comments</span>
<span class="t" style="left:4.79px;top:92px;font-size:6.9px;color:#605e5c;transform:scaleX(0.961);">Undo</span>
<span class="t" style="left:37.89px;top:92px;font-size:6.9px;color:#605e5c;transform:scaleX(0.937);">Clipboard</span>
<span class="t" style="left:147.69px;top:92px;font-size:6.9px;color:#605e5c;transform:scaleX(0.974);">Font</span>
<span class="t" style="left:398.29px;top:92px;font-size:6.9px;color:#605e5c;transform:scaleX(1.099);">Number</span>
<span class="t" style="left:509.99px;top:92px;font-size:6.9px;color:#605e5c;transform:scaleX(0.875);">Styles</span>
<span class="t" style="left:612.79px;top:92px;font-size:6.9px;color:#605e5c;transform:scaleX(0.903);">Cells</span>
<span class="t" style="left:34.37px;top:68px;font-size:7.8px;color:#3a3a3a;transform:scaleX(0.870);">Paste</span>
<span class="t" style="left:85.83px;top:55px;font-size:9px;color:#55534f;transform:scaleX(0.838);">Calibri</span>
<span class="t" style="left:165.20px;top:55px;font-size:9px;color:#55534f;transform:scaleX(0.900);">11</span>
<span class="t" style="left:198.86px;top:54px;font-size:11.2px;color:#3a3a3a;transform:scaleX(0.950);">A</span>
<span class="t" style="left:214.53px;top:54px;font-size:9.4px;color:#3a3a3a;transform:scaleX(0.950);">A</span>
<span class="t" style="left:87.01px;top:71px;font-size:9.6px;color:#3a3a3a;font-weight:bold;transform:scaleX(0.950);">B</span>
<span class="t" style="left:103.33px;top:72px;font-size:10px;color:#3a3a3a;font-style:italic;font-family:'Liberation Serif', serif;">I</span>
<span class="t" style="left:116.61px;top:71px;font-size:9px;color:#3a3a3a;transform:scaleX(0.950);">U</span>
<span class="t" style="left:131.91px;top:71px;font-size:9px;color:#605e5c;transform:scaleX(0.950);">D</span>
<span class="t" style="left:146.10px;top:71px;font-size:9px;color:#605e5c;transform:scaleX(0.800);">ab</span>
<span class="t" style="left:204.26px;top:70px;font-size:9.6px;color:#3a3a3a;transform:scaleX(0.950);">A</span>
<span class="t" style="left:398.40px;top:72px;font-size:10px;color:#3a3a3a;transform:scaleX(0.900);">%</span>
<span class="t" style="left:468.17px;top:70px;font-size:7.8px;color:#3a3a3a;transform:scaleX(0.993);">Conditional</span>
<span class="t" style="left:465.37px;top:80px;font-size:7.8px;color:#3a3a3a;">Formatting</span>
<span class="t" style="left:511.77px;top:70px;font-size:7.8px;color:#3a3a3a;transform:scaleX(0.944);">Format As</span>
<span class="t" style="left:516.87px;top:80px;font-size:7.8px;color:#3a3a3a;transform:scaleX(0.893);">Table</span>
<span class="t" style="left:549.47px;top:70px;font-size:7.8px;color:#3a3a3a;transform:scaleX(0.911);">Styles</span>
<span class="t" style="left:584.47px;top:70px;font-size:7.8px;color:#3a3a3a;transform:scaleX(1.012);">Insert</span>
<span class="t" style="left:608.47px;top:70px;font-size:7.8px;color:#3a3a3a;transform:scaleX(0.978);">Delete</span>
<span class="t" style="left:632.97px;top:70px;font-size:7.8px;color:#3a3a3a;transform:scaleX(0.953);">Format</span>
<span class="t" style="left:668.47px;top:70px;font-size:7.8px;color:#3a3a3a;transform:scaleX(1.004);">Editing</span>
<span class="t" style="left:5.23px;top:106px;font-size:9px;color:#3a3a3a;transform:scaleX(0.850);">C2</span>
<span class="t" style="left:126.20px;top:105px;font-size:11px;color:#3b3a39;font-style:italic;font-family:'Liberation Serif', serif;">f</span>
<span class="t" style="left:129.60px;top:108px;font-size:7.5px;color:#3b3a39;font-weight:bold;font-style:italic;font-family:'Liberation Serif', serif;">x</span>
<span class="t" style="left:143.13px;top:106px;font-size:9px;color:#3a3a3a;transform:scaleX(0.942);">1:34:19 AM</span>
<span class="t" style="left:59.60px;top:128px;font-size:12px;color:#5a5a5a;transform:scaleX(0.950);">A</span>
<span class="t" style="left:127.10px;top:128px;font-size:12px;color:#5a5a5a;transform:scaleX(0.950);">B</span>
<span class="t" style="left:405.52px;top:128px;font-size:12px;color:#5a5a5a;transform:scaleX(0.950);">F</span>
<span class="t" style="left:464.17px;top:128px;font-size:12px;color:#5a5a5a;transform:scaleX(0.950);">G</span>
<span class="t" style="left:524.08px;top:128px;font-size:12px;color:#5a5a5a;transform:scaleX(0.950);">H</span>
<span class="t" style="left:586.22px;top:128px;font-size:12px;color:#5a5a5a;transform:scaleX(0.950);">I</span>
<span class="t" style="left:644.55px;top:128px;font-size:12px;color:#5a5a5a;transform:scaleX(0.950);">J</span>
<span class="t" style="left:703.20px;top:128px;font-size:12px;color:#5a5a5a;transform:scaleX(0.950);">K</span>
<span class="t" style="left:763.43px;top:128px;font-size:12px;color:#5a5a5a;transform:scaleX(0.950);">L</span>
<span class="t" style="left:210.08px;top:128px;font-size:12px;color:#1e6e42;font-weight:bold;transform:scaleX(0.950);">C</span>
<span class="t" style="left:13.13px;top:146px;font-size:12.4px;color:#555;transform:scaleX(0.920);">1</span>
<span class="t" style="left:13.13px;top:165px;font-size:12.4px;color:#1e6e42;font-weight:bold;transform:scaleX(0.920);">2</span>
<span class="t" style="left:13.13px;top:184px;font-size:12.4px;color:#1e6e42;font-weight:bold;transform:scaleX(0.920);">3</span>
<span class="t" style="left:13.13px;top:202px;font-size:12.4px;color:#1e6e42;font-weight:bold;transform:scaleX(0.920);">4</span>
<span class="t" style="left:13.13px;top:221px;font-size:12.4px;color:#1e6e42;font-weight:bold;transform:scaleX(0.920);">5</span>
<span class="t" style="left:13.13px;top:240px;font-size:12.4px;color:#1e6e42;font-weight:bold;transform:scaleX(0.920);">6</span>
<span class="t" style="left:13.13px;top:258px;font-size:12.4px;color:#1e6e42;font-weight:bold;transform:scaleX(0.920);">7</span>
<span class="t" style="left:13.13px;top:277px;font-size:12.4px;color:#1e6e42;font-weight:bold;transform:scaleX(0.920);">8</span>
<span class="t" style="left:13.13px;top:296px;font-size:12.4px;color:#1e6e42;font-weight:bold;transform:scaleX(0.920);">9</span>
<span class="t" style="left:9.96px;top:314px;font-size:12.4px;color:#555;transform:scaleX(0.920);">10</span>
<span class="t" style="left:10.38px;top:333px;font-size:12.4px;color:#555;transform:scaleX(0.920);">11</span>
<span class="t" style="left:95.83px;top:148px;font-size:12.2px;color:#fff;font-weight:bold;transform:scaleX(0.960);">Employee</span>
<span class="t" style="left:171.80px;top:148px;font-size:12.2px;color:#fff;font-weight:bold;transform:scaleX(0.982);">Time Duration</span>
<span class="t" style="left:95.60px;top:167px;font-size:12.2px;color:#1a1a1a;">Ben</span>
<span class="t" style="left:214.90px;top:167px;font-size:12.2px;color:#1a1a1a;">1:34:19</span>
<span class="t" style="left:95.60px;top:185px;font-size:12.2px;color:#1a1a1a;">Mark</span>
<span class="t" style="left:214.90px;top:185px;font-size:12.2px;color:#1a1a1a;">2:44:32</span>
<span class="t" style="left:95.60px;top:204px;font-size:12.2px;color:#1a1a1a;">Lea</span>
<span class="t" style="left:214.90px;top:204px;font-size:12.2px;color:#1a1a1a;">3:04:10</span>
<span class="t" style="left:95.60px;top:223px;font-size:12.2px;color:#1a1a1a;">Johnny</span>
<span class="t" style="left:214.90px;top:223px;font-size:12.2px;color:#1a1a1a;">2:14:45</span>
<span class="t" style="left:95.60px;top:241px;font-size:12.2px;color:#1a1a1a;">Jake</span>
<span class="t" style="left:214.90px;top:241px;font-size:12.2px;color:#1a1a1a;">1:30:27</span>
<span class="t" style="left:95.60px;top:260px;font-size:12.2px;color:#1a1a1a;">Mia</span>
<span class="t" style="left:214.90px;top:260px;font-size:12.2px;color:#1a1a1a;">2:22:08</span>
<span class="t" style="left:95.60px;top:279px;font-size:12.2px;color:#1a1a1a;">Anna</span>
<span class="t" style="left:214.90px;top:279px;font-size:12.2px;color:#1a1a1a;">1:36:50</span>
<span class="t" style="left:95.60px;top:298px;font-size:12.2px;color:#1a1a1a;">Thea</span>
<span class="t" style="left:214.90px;top:298px;font-size:12.2px;color:#1a1a1a;">2:25:05</span>
<span class="t" style="left:66.32px;top:366px;font-size:9.33px;color:#242424;-webkit-text-stroke:0.32px #242424;transform:scaleX(0.904);">Sheet1</span>
<span class="t" style="left:8.76px;top:385px;font-size:8px;color:#484644;transform:scaleX(0.942);">Calculation Mode: Automatic</span>
<span class="t" style="left:115.36px;top:385px;font-size:8px;color:#484644;transform:scaleX(0.932);">Workbook Statistics</span>
<span class="t" style="left:442.76px;top:385px;font-size:8px;color:#484644;transform:scaleX(0.918);">Average: 2:11:24</span>
<span class="t" style="left:505.16px;top:385px;font-size:8px;color:#484644;transform:scaleX(0.951);">Count: 8</span>
<span class="t" style="left:540.66px;top:385px;font-size:8px;color:#484644;transform:scaleX(0.912);">Sum: 17:31:16</span>
<span class="t" style="left:626.86px;top:385px;font-size:8px;color:#484644;transform:scaleX(0.935);">Give Feedback to Microsoft</span>
<span class="t" style="left:755.50px;top:385px;font-size:8px;color:#484644;transform:scaleX(0.900);">150%</span>
</div>
<div class="ly">
<div class="a" style="left:242.10px;top:2.20px;width:162.80px;height:326.90px;background:#fff;border-radius:2.5px;box-shadow:0 1.5px 6px rgba(0,0,0,.28),0 0 1.5px rgba(0,0,0,.18);"></div>
<div class="a" style="left:250.50px;top:9.40px;width:146.70px;height:18.70px;background:#fff;border:0.7px solid #e3e1df;box-sizing:border-box;border-radius:2.5px;"></div>
<svg class="a" style="left:251.50px;top:35.10px;" width="8.64" height="11.34" viewBox="0 0 8 10.5"><path d="M2.2 0.6 L5.6 7.2 M5.8 0.6 L2.4 7.2" stroke="#5c5b5a" stroke-width="0.7" fill="none" stroke-linecap="round"/><circle cx="2" cy="8.4" r="1.15" fill="#fff" stroke="#2b88d8" stroke-width="0.8"/><circle cx="6" cy="8.4" r="1.15" fill="#fff" stroke="#2b88d8" stroke-width="0.8"/></svg>
<svg class="a" style="left:250.40px;top:55.80px;" width="12.075000000000001" height="11.025" viewBox="0 0 11.5 10.5"><path d="M0.8 0.8 H5 V7.6 H0.8 Z" fill="none" stroke="#5c5b5a" stroke-width="0.75"/><path d="M4.6 2.6 H8 L10.4 5 V9.8 H4.6 Z" fill="#fff" stroke="#5c5b5a" stroke-width="0.75" stroke-linejoin="round"/><path d="M8 2.6 V5 H10.4 M6.8 7 H8.4 M6.8 8.2 H8.4" fill="none" stroke="#5c5b5a" stroke-width="0.55"/></svg>
<div class="a" style="left:248.40px;top:70.65px;width:151.30px;height:0.70px;background:#d2d0ce;"></div>
<div class="a" style="left:248.40px;top:120.45px;width:151.30px;height:0.70px;background:#d2d0ce;"></div>
<div class="a" style="left:248.40px;top:202.05px;width:151.30px;height:0.70px;background:#d2d0ce;"></div>
<div class="a" style="left:248.40px;top:305.55px;width:151.30px;height:0.70px;background:#d2d0ce;"></div>
<svg class="a" style="left:250.30px;top:97.20px;" width="19" height="19" viewBox="0 0 19 19"><g opacity="1"><path d="M4 3.2 H1.6 Q0.8 3.2 0.8 4 V15.6 Q0.8 16.4 1.6 16.4 H6" fill="none" stroke="#e8912d" stroke-width="1.15"/><path d="M9.6 3.2 H12 Q12.8 3.2 12.8 4 V8" fill="none" stroke="#e8912d" stroke-width="1.15"/><path d="M3.8 4.4 V2.8 H5.2 Q5.4 0.9 6.8 0.9 Q8.2 0.9 8.4 2.8 H9.8 V4.4 Z" fill="#fff" stroke="#605e5c" stroke-width="0.7"/></g><rect x="7.6" y="8.2" width="7.2" height="9.4" rx="0.5" fill="#fff" stroke="#605e5c" stroke-width="0.8"/></svg>
<svg class="a" style="left:275.20px;top:97.20px;" width="19" height="19" viewBox="0 0 19 19"><g opacity="1"><path d="M4 3.2 H1.6 Q0.8 3.2 0.8 4 V15.6 Q0.8 16.4 1.6 16.4 H6" fill="none" stroke="#e8912d" stroke-width="1.15"/><path d="M9.6 3.2 H12 Q12.8 3.2 12.8 4 V8" fill="none" stroke="#e8912d" stroke-width="1.15"/><path d="M3.8 4.4 V2.8 H5.2 Q5.4 0.9 6.8 0.9 Q8.2 0.9 8.4 2.8 H9.8 V4.4 Z" fill="#fff" stroke="#605e5c" stroke-width="0.7"/></g><text x="5.6" y="17.4" style="font-family:'Liberation Sans',sans-serif;font-size:7.3px;letter-spacing:-0.4px" fill="#3b3a39">123</text></svg>
<svg class="a" style="left:299.90px;top:97.20px;" width="19" height="19" viewBox="0 0 19 19"><g opacity="0.9"><path d="M4 3.2 H1.6 Q0.8 3.2 0.8 4 V15.6 Q0.8 16.4 1.6 16.4 H6" fill="none" stroke="#f3cf9f" stroke-width="1.15"/><path d="M9.6 3.2 H12 Q12.8 3.2 12.8 4 V8" fill="none" stroke="#f3cf9f" stroke-width="1.15"/><path d="M3.8 4.4 V2.8 H5.2 Q5.4 0.9 6.8 0.9 Q8.2 0.9 8.4 2.8 H9.8 V4.4 Z" fill="#fff" stroke="#b5b3b1" stroke-width="0.7"/></g><text x="7.2" y="16.6" style="font-family:'Liberation Serif',serif;font-size:11px;font-style:italic" fill="#bab8b6">fx</text></svg>
<svg class="a" style="left:324.60px;top:97.20px;" width="19" height="19" viewBox="0 0 19 19"><g opacity="0.9"><path d="M4 3.2 H1.6 Q0.8 3.2 0.8 4 V15.6 Q0.8 16.4 1.6 16.4 H6" fill="none" stroke="#f3cf9f" stroke-width="1.15"/><path d="M9.6 3.2 H12 Q12.8 3.2 12.8 4 V8" fill="none" stroke="#f3cf9f" stroke-width="1.15"/><path d="M3.8 4.4 V2.8 H5.2 Q5.4 0.9 6.8 0.9 Q8.2 0.9 8.4 2.8 H9.8 V4.4 Z" fill="#fff" stroke="#b5b3b1" stroke-width="0.7"/></g><path d="M8 11.6 Q10.6 8.6 13.4 10.4 M13.6 8.6 V10.6 H11.6 M14.4 13.2 Q11.8 16.2 9 14.4 M8.8 16.2 V14.2 H10.8" fill="none" stroke="#9cc7ec" stroke-width="0.8" stroke-linecap="round"/></svg>
<svg class="a" style="left:349.60px;top:97.20px;" width="19" height="19" viewBox="0 0 19 19"><g opacity="0.9"><path d="M4 3.2 H1.6 Q0.8 3.2 0.8 4 V15.6 Q0.8 16.4 1.6 16.4 H6" fill="none" stroke="#f3cf9f" stroke-width="1.15"/><path d="M9.6 3.2 H12 Q12.8 3.2 12.8 4 V8" fill="none" stroke="#f3cf9f" stroke-width="1.15"/><path d="M3.8 4.4 V2.8 H5.2 Q5.4 0.9 6.8 0.9 Q8.2 0.9 8.4 2.8 H9.8 V4.4 Z" fill="#fff" stroke="#b5b3b1" stroke-width="0.7"/></g><path d="M15.4 5.8 L10.6 12.4" stroke="#b5b3b1" stroke-width="1.7" stroke-linecap="round"/><path d="M15.4 5.8 L10.6 12.4" stroke="#fff" stroke-width="0.6" stroke-linecap="round"/><path d="M7.2 16.8 Q6.8 14 9.4 12.4 Q11.8 12.6 11.4 14.6 Q10 17 7.2 16.8 Z" fill="#a6cdee"/><path d="M5 6.2 H7.4 M5 8 H7 M5.4 9.8 H7" stroke="#c9dff2" stroke-width="0.6"/></svg>
<svg class="a" style="left:374.20px;top:97.20px;" width="19" height="19" viewBox="0 0 19 19"><g opacity="0.9"><path d="M4 3.2 H1.6 Q0.8 3.2 0.8 4 V15.6 Q0.8 16.4 1.6 16.4 H6" fill="none" stroke="#f3cf9f" stroke-width="1.15"/><path d="M9.6 3.2 H12 Q12.8 3.2 12.8 4 V8" fill="none" stroke="#f3cf9f" stroke-width="1.15"/><path d="M3.8 4.4 V2.8 H5.2 Q5.4 0.9 6.8 0.9 Q8.2 0.9 8.4 2.8 H9.8 V4.4 Z" fill="#fff" stroke="#b5b3b1" stroke-width="0.7"/></g><rect x="6.6" y="12" width="6" height="3.8" rx="1.9" fill="none" stroke="#9cc7ec" stroke-width="0.9"/><rect x="10.4" y="12" width="6" height="3.8" rx="1.9" fill="none" stroke="#9cc7ec" stroke-width="0.9"/></svg>
<svg class="a" style="left:389.50px;top:127.30px;" width="6" height="9" viewBox="0 0 6 9"><path d="M1.4 1 L4.6 4.5 L1.4 8" fill="none" stroke="#484644" stroke-width="0.85" stroke-linecap="round" stroke-linejoin="round"/></svg>
<svg class="a" style="left:389.50px;top:147.30px;" width="6" height="9" viewBox="0 0 6 9"><path d="M1.4 1 L4.6 4.5 L1.4 8" fill="none" stroke="#484644" stroke-width="0.85" stroke-linecap="round" stroke-linejoin="round"/></svg>
<svg class="a" style="left:389.50px;top:186.90px;" width="6" height="9" viewBox="0 0 6 9"><path d="M1.4 1 L4.6 4.5 L1.4 8" fill="none" stroke="#484644" stroke-width="0.85" stroke-linecap="round" stroke-linejoin="round"/></svg>
<svg class="a" style="left:249.60px;top:207.00px;" width="13" height="12" viewBox="0 0 13 12"><path d="M5.6 2.6 H10.8 Q11.6 2.6 11.6 3.4 V7.8 Q11.6 8.6 10.8 8.6 H6.2 L4 10.6 V8.6 H3.2 Q2.4 8.6 2.4 7.8 V5.6" fill="none" stroke="#5c5b5a" stroke-width="0.75" stroke-linejoin="round"/><path d="M2.6 -0.4 V4.6 M0.1 2.1 H5.1" stroke="#107c41" stroke-width="0.9"/></svg>
<svg class="a" style="left:249.60px;top:227.00px;" width="13" height="12" viewBox="0 0 13 12"><path d="M5.6 2.8 H11 V7.6 L8.6 10.4 H3 V5.6 M11 7.6 H8.6 V10.4" fill="none" stroke="#5c5b5a" stroke-width="0.75" stroke-linejoin="round"/><path d="M2.6 -0.4 V4.6 M0.1 2.1 H5.1" stroke="#107c41" stroke-width="0.9"/></svg>
<div class="a" style="left:241.30px;top:242.90px;width:163.40px;height:24.10px;background:#f3f2f1;border:2.1px solid #e5202e;box-sizing:border-box;"></div>
<svg class="a" style="left:250.00px;top:249.20px;" width="13" height="13" viewBox="0 0 13 13"><path d="M8.6 6 A4 4 0 1 0 4.2 8.6" fill="none" stroke="#2b88d8" stroke-width="0.8"/><path d="M4.8 2.4 V4.8 H6.8" fill="none" stroke="#2b88d8" stroke-width="0.7"/><text x="3.2" y="13" style="font-family:'Liberation Sans',sans-serif;font-size:6.6px;letter-spacing:-0.4px" fill="#3b3a39">123</text></svg>
<svg class="a" style="left:250.00px;top:271.40px;" width="13" height="8" viewBox="0 0 13 8"><rect x="0.8" y="1" width="7" height="4.4" rx="2.2" fill="none" stroke="#5c5b5a" stroke-width="0.75"/><rect x="5" y="2.6" width="7" height="4.4" rx="2.2" fill="#fff" stroke="#5c5b5a" stroke-width="0.75"/></svg>
<svg class="a" style="left:250.00px;top:289.40px;" width="14" height="13" viewBox="0 0 14 13"><rect x="0.6" y="0.6" width="10" height="10" fill="none" stroke="#5c5b5a" stroke-width="0.7"/><path d="M0.6 4 H10.6 M0.6 7.4 H10.6 M4 0.6 V10.6 M7.4 0.6 V10.6" stroke="#5c5b5a" stroke-width="0.55"/><rect x="3.4" y="6.6" width="10.2" height="6.2" fill="#fff"/><rect x="4.4" y="7.8" width="5" height="3.4" rx="1.7" fill="none" stroke="#2b88d8" stroke-width="0.8"/><rect x="8" y="8.8" width="5" height="3.4" rx="1.7" fill="none" stroke="#2b88d8" stroke-width="0.8"/></svg>
<svg class="a" style="left:250.00px;top:310.60px;" width="14" height="13" viewBox="0 0 14 13"><rect x="0.6" y="0.6" width="10" height="10" fill="none" stroke="#5c5b5a" stroke-width="0.7"/><path d="M0.6 4 H10.6 M0.6 7.4 H10.6 M4 0.6 V10.6 M7.4 0.6 V10.6" stroke="#5c5b5a" stroke-width="0.55"/><circle cx="9.6" cy="9.2" r="3.4" fill="#fff" stroke="#2b88d8" stroke-width="0.8"/><path d="M9.6 7.2 V9.4 H11.2" fill="none" stroke="#2b88d8" stroke-width="0.7"/></svg>
<span class="t" style="left:255.72px;top:9px;font-size:9.33px;color:#6a6866;transform:scaleX(0.912);">Search the menus</span>
<span class="t" style="left:268.42px;top:31px;font-size:9.33px;color:#323130;transform:scaleX(0.966);">Cut</span>
<span class="t" style="left:268.42px;top:51px;font-size:9.33px;color:#323130;transform:scaleX(0.970);">Copy</span>
<span class="t" style="left:250.22px;top:73px;font-size:9.33px;color:#242424;-webkit-text-stroke:0.32px #242424;transform:scaleX(0.944);">Paste Options</span>
<span class="t" style="left:268.42px;top:123px;font-size:9.33px;color:#323130;transform:scaleX(0.974);">Insert</span>
<span class="t" style="left:268.42px;top:142px;font-size:9.33px;color:#323130;transform:scaleX(0.954);">Delete</span>
<span class="t" style="left:268.42px;top:162px;font-size:9.33px;color:#323130;transform:scaleX(0.923);">Clear Contents</span>
<span class="t" style="left:268.42px;top:182px;font-size:9.33px;color:#323130;transform:scaleX(0.983);">Sort</span>
<span class="t" style="left:268.42px;top:204px;font-size:9.33px;color:#323130;transform:scaleX(0.949);">New Comment</span>
<span class="t" style="left:268.42px;top:224px;font-size:9.33px;color:#323130;transform:scaleX(0.972);">New Note</span>
<span class="t" style="left:268.42px;top:246px;font-size:9.33px;color:#323130;transform:scaleX(0.929);">Number Format...</span>
<span class="t" style="left:268.42px;top:266px;font-size:9.33px;color:#323130;transform:scaleX(0.929);">Hyperlink...</span>
<span class="t" style="left:268.42px;top:286px;font-size:9.33px;color:#323130;transform:scaleX(0.931);">Link to this Range</span>
<span class="t" style="left:268.42px;top:307px;font-size:9.33px;color:#323130;transform:scaleX(0.908);">Show Changes</span>
</div>
<div class="ly">
<div class="a" style="left:242.00px;top:337.30px;width:232.30px;height:43.50px;background:#fff;border-radius:2.5px;box-shadow:0 1.5px 6px rgba(0,0,0,.28),0 0 1.5px rgba(0,0,0,.18);"></div>
<div class="a" style="left:244.80px;top:340.20px;width:111.70px;height:17.20px;background:#fff;border:0.7px solid #d2d0ce;box-sizing:border-box;border-radius:1px;"></div>
<div class="a" style="left:323.70px;top:340.20px;width:0.70px;height:17.20px;background:#d2d0ce;"></div>
<svg class="a" style="left:315.00px;top:347.05px;" width="7.2" height="4.7" viewBox="0 0 7.2 4.7"><path d="M1 1 L3.60 3.70 L6.20 1" fill="none" stroke="#3b3a39" stroke-width="1.0" stroke-linecap="round" stroke-linejoin="round"/></svg>
<svg class="a" style="left:347.00px;top:347.05px;" width="7.2" height="4.7" viewBox="0 0 7.2 4.7"><path d="M1 1 L3.60 3.70 L6.20 1" fill="none" stroke="#3b3a39" stroke-width="1.0" stroke-linecap="round" stroke-linejoin="round"/></svg>
<svg class="a" style="left:367.10px;top:344.30px;" width="4.6" height="0.6000000000000001" viewBox="0 0 4.6 0.6000000000000001"><path d="M1 1 L2.30 -0.40 L3.60 1" fill="none" stroke="#2b88d8" stroke-width="0.7" stroke-linecap="round" stroke-linejoin="round"/></svg>
<svg class="a" style="left:383.70px;top:343.10px;" width="4.6" height="3.4" viewBox="0 0 4.6 3.4"><path d="M1 1 L2.30 2.40 L3.60 1" fill="none" stroke="#2b88d8" stroke-width="0.7" stroke-linecap="round" stroke-linejoin="round"/></svg>
<svg class="a" style="left:408.20px;top:347.05px;" width="7.2" height="4.7" viewBox="0 0 7.2 4.7"><path d="M1 1 L3.60 3.70 L6.20 1" fill="none" stroke="#3b3a39" stroke-width="1.0" stroke-linecap="round" stroke-linejoin="round"/></svg>
<svg class="a" style="left:441.55px;top:343.43px;" width="6.8999999999999995" height="10.35" viewBox="0 0 6 9"><circle cx="3.4" cy="2.8" r="2.35" fill="#323130"/><path d="M5.75 2.6 Q6.2 6.8 1 8.9 L0.5 8.2 Q3.5 6.6 3.4 4.2 Z" fill="#323130"/></svg>
<svg class="a" style="left:456.60px;top:343.40px;" width="11.4" height="11" viewBox="0 0 11.4 11"><rect x="0.5" y="0.5" width="10.2" height="9.8" fill="#fff" stroke="#5c5b5a" stroke-width="0.7"/><path d="M0.5 2.8 H10.7 M0.5 7.8 H10.7 M3.6 0.5 V2.8 M7.4 0.5 V2.8 M3.6 7.8 V10.3 M7.4 7.8 V10.3" stroke="#5c5b5a" stroke-width="0.5"/><rect x="0.9" y="3.1" width="9.4" height="4.4" fill="#cfe4f7"/><path d="M2 5.3 H9.2 M2 5.3 L3.4 4.1 M2 5.3 L3.4 6.5 M9.2 5.3 L7.8 4.1 M9.2 5.3 L7.8 6.5" stroke="#2b88d8" stroke-width="0.7" fill="none"/></svg>
<svg class="a" style="left:283.80px;top:362.70px;" width="11.2" height="11.2" viewBox="0 0 11.2 11.2"><rect x="0.5" y="0.5" width="10.2" height="10.2" fill="#fff" stroke="#3b3a39" stroke-width="1.0"/><path d="M5.6 0.5 V10.7 M0.5 5.6 H10.7" stroke="#3b3a39" stroke-width="1.0"/></svg>
<svg class="a" style="left:298.20px;top:366.65px;" width="7.2" height="4.7" viewBox="0 0 7.2 4.7"><path d="M1 1 L3.60 3.70 L6.20 1" fill="none" stroke="#3b3a39" stroke-width="1.0" stroke-linecap="round" stroke-linejoin="round"/></svg>
<svg class="a" style="left:310.96px;top:362.36px;" width="11.88" height="12.96" viewBox="0 0 11 12"><path d="M4.6 1.4 L8 4.8 L4.8 8 L1.4 4.6 Z" fill="#fff" stroke="#3b3a39" stroke-width="0.85" stroke-linejoin="round"/><path d="M3.4 0.5 L5.2 2.2" stroke="#3b3a39" stroke-width="0.8" stroke-linecap="round"/><path d="M7.2 1.9 Q10.2 2.6 10 7.2 H8.5 Q8.9 4.6 6.5 2.9 Z" fill="#2b7cd3"/><rect x="0.4" y="8.9" width="10.2" height="2.2" fill="#cfdbf0"/></svg>
<svg class="a" style="left:325.80px;top:366.65px;" width="7.2" height="4.7" viewBox="0 0 7.2 4.7"><path d="M1 1 L3.60 3.70 L6.20 1" fill="none" stroke="#3b3a39" stroke-width="1.0" stroke-linecap="round" stroke-linejoin="round"/></svg>
<svg class="a" style="left:352.80px;top:366.65px;" width="7.2" height="4.7" viewBox="0 0 7.2 4.7"><path d="M1 1 L3.60 3.70 L6.20 1" fill="none" stroke="#3b3a39" stroke-width="1.0" stroke-linecap="round" stroke-linejoin="round"/></svg>
<svg class="a" style="left:364.40px;top:363.60px;" width="10.4" height="10" viewBox="0 0 10.4 10"><path d="M0.4 0.8 H10 M1.8 3.6 H8.6 M0.4 6.4 H10 M1.8 9.2 H8.6" stroke="#3b3a39" stroke-width="0.7"/></svg>
<svg class="a" style="left:380.00px;top:362.40px;" width="15" height="13" viewBox="0 0 15 13"><text x="0.4" y="5.6" style="font-family:'Liberation Sans',sans-serif;font-size:6.8px;letter-spacing:-0.3px" fill="#3b3a39">ab</text><text x="0.6" y="12" style="font-family:'Liberation Sans',sans-serif;font-size:6.8px" fill="#3b3a39">c</text><path d="M9 3 H11.4 Q13.6 3 13.6 6 V7.6 Q13.6 9.8 11.4 9.8 H6 M6 9.8 L7.8 8 M6 9.8 L7.8 11.6" fill="none" stroke="#2b88d8" stroke-width="0.8"/></svg>
<svg class="a" style="left:398.75px;top:362.35px;" width="12.5" height="12.5" viewBox="0 0 10 10"><path d="M0.5 2.9 H4 M0.5 2.9 L2 1.4 M0.5 2.9 L2 4.4" stroke="#2b88d8" stroke-width="0.75" fill="none" stroke-linecap="round"/><text x="4.3" y="4.6" style="font-family:'Liberation Sans',sans-serif;font-size:5.7px;letter-spacing:-0.35px" fill="#3b3a39">.0</text><text x="1.6" y="9.5" style="font-family:'Liberation Sans',sans-serif;font-size:5.7px;letter-spacing:-0.35px" fill="#3b3a39">.00</text></svg>
<svg class="a" style="left:417.35px;top:362.35px;" width="12.5" height="12.5" viewBox="0 0 10 10"><path d="M0.3 7.5 H3.8 M3.8 7.5 L2.3 6 M3.8 7.5 L2.3 9" stroke="#2b88d8" stroke-width="0.75" fill="none" stroke-linecap="round"/><text x="1.8" y="4.6" style="font-family:'Liberation Sans',sans-serif;font-size:5.7px;letter-spacing:-0.35px" fill="#3b3a39">.00</text><text x="4.6" y="9.5" style="font-family:'Liberation Sans',sans-serif;font-size:5.7px;letter-spacing:-0.35px" fill="#3b3a39">.0</text></svg>
<svg class="a" style="left:435.00px;top:363.20px;" width="11.0" height="11.0" viewBox="0 0 11 11"><path d="M6.4 3.4 L9.4 0.8 L10.3 1.8 L7.8 4.9" fill="#fff" stroke="#5c5b5a" stroke-width="0.8" stroke-linejoin="round"/><path d="M4.6 2.6 L8.6 6.6 L7.4 7.8 L3.4 3.8 Z" fill="#c8c6c4" stroke="#5c5b5a" stroke-width="0.6"/><path d="M3.2 4.2 L7 8 L3.4 10.2 L0.8 6.6 Z" fill="#fff" stroke="#e8912d" stroke-width="1" stroke-linejoin="round"/><path d="M2.2 6.4 L4.6 9.2" stroke="#e8912d" stroke-width="0.9"/></svg>
<span class="t" style="left:248.12px;top:339px;font-size:9.33px;color:#323130;transform:scaleX(0.928);">Calibri</span>
<span class="t" style="left:327.20px;top:339px;font-size:9.33px;color:#323130;transform:scaleX(0.920);">11</span>
<span class="t" style="left:359.80px;top:339px;font-size:12px;color:#323130;transform:scaleX(0.950);">A</span>
<span class="t" style="left:377.83px;top:340px;font-size:10px;color:#323130;transform:scaleX(0.950);">A</span>
<span class="t" style="left:396.36px;top:339px;font-size:11.5px;color:#323130;transform:scaleX(0.950);">$</span>
<span class="t" style="left:422.60px;top:340px;font-size:12px;color:#323130;transform:scaleX(0.900);">%</span>
<span class="t" style="left:249.53px;top:359px;font-size:11px;color:#242424;font-weight:bold;transform:scaleX(0.950);">B</span>
<span class="t" style="left:268.29px;top:359px;font-size:11.5px;color:#323130;font-style:italic;font-family:'Liberation Serif', serif;">I</span>
<span class="t" style="left:340.71px;top:359px;font-size:10.4px;color:#323130;transform:scaleX(0.950);">A</span>
</div>
</div></body></html>
